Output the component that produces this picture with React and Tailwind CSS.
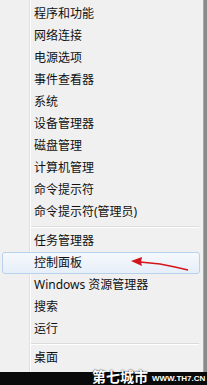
import React from "react";

const groups = [
  ["程序和功能", "网络连接", "电源选项", "事件查看器", "系统", "设备管理器", "磁盘管理", "计算机管理", "命令提示符", "命令提示符(管理员)"],
  ["任务管理器", "控制面板", "Windows 资源管理器", "搜索", "运行"],
  ["桌面"],
];

function Item({ label }) {
  const hi = label === "控制面板";
  return (
    <div className="relative h-[22px] flex items-center">
      {hi && (
        <div className="absolute left-[2px] right-[3px] top-0 bottom-0 rounded-[3px] border border-[#b8d2ee] bg-gradient-to-b from-[#f6f9fd] to-[#e6eef8]" />
      )}
      <span className="relative pl-[34px] text-[12px] leading-none text-[#111]">{label}</span>
    </div>
  );
}

function Sep() {
  return (
    <div className="h-[7px] flex flex-col justify-center pl-[31px] pr-[4px]">
      <div className="h-px bg-[#dcdcdc]" />
      <div className="h-px bg-white" />
    </div>
  );
}

export default function App() {
  return (
    <div
      className="relative w-[207px] h-[385px] overflow-hidden bg-[#f0f0f0]"
      style={{ fontFamily: '"Noto Sans", "Noto Sans CJK SC", sans-serif' }}
    >
      <div className="flex h-[372px]">
        <div className="relative flex-1 flex flex-col pt-[3px]">
          <div className="absolute left-[29px] top-0 bottom-0 w-px bg-[#e0e0e0]" />
          <div className="absolute left-[30px] top-0 bottom-0 w-px bg-white" />
          {groups.map((g, gi) => (
            <React.Fragment key={gi}>
              {gi > 0 && <Sep />}
              {g.map((l) => (
                <Item key={l} label={l} />
              ))}
            </React.Fragment>
          ))}
        </div>
        <div className="w-[4px] flex">
          <div className="w-px bg-[#a8a8a8]" />
          <div className="flex-1 bg-[#8a8a8a]" />
        </div>
      </div>
      <div className="h-[13px] bg-[#0a0a0a]" />

      <svg className="absolute left-0 top-0" width="207" height="385" viewBox="0 0 207 385">
        <path d="M140 262 L160 264 L175 267 L188 270" stroke="#d4141c" strokeWidth="1.3" fill="none" />
        <path d="M131 261 L142 257 L141 262 L142 266 Z" fill="#d4141c" />
      </svg>

      <div className="absolute left-[92px] top-[369px] text-[14px] leading-[15px] text-white font-bold [text-shadow:0_0_2px_#000,1px_1px_0_#000]" style={{ fontFamily: '"Noto Sans CJK SC", sans-serif' }}>
        第七城市
      </div>
      <div className="absolute left-[152px] top-[375px] text-[8px] leading-[8px] text-white font-bold" style={{ fontFamily: '"Liberation Sans", sans-serif' }}>
        WWW.TH7.CN
      </div>
    </div>
  );
}
